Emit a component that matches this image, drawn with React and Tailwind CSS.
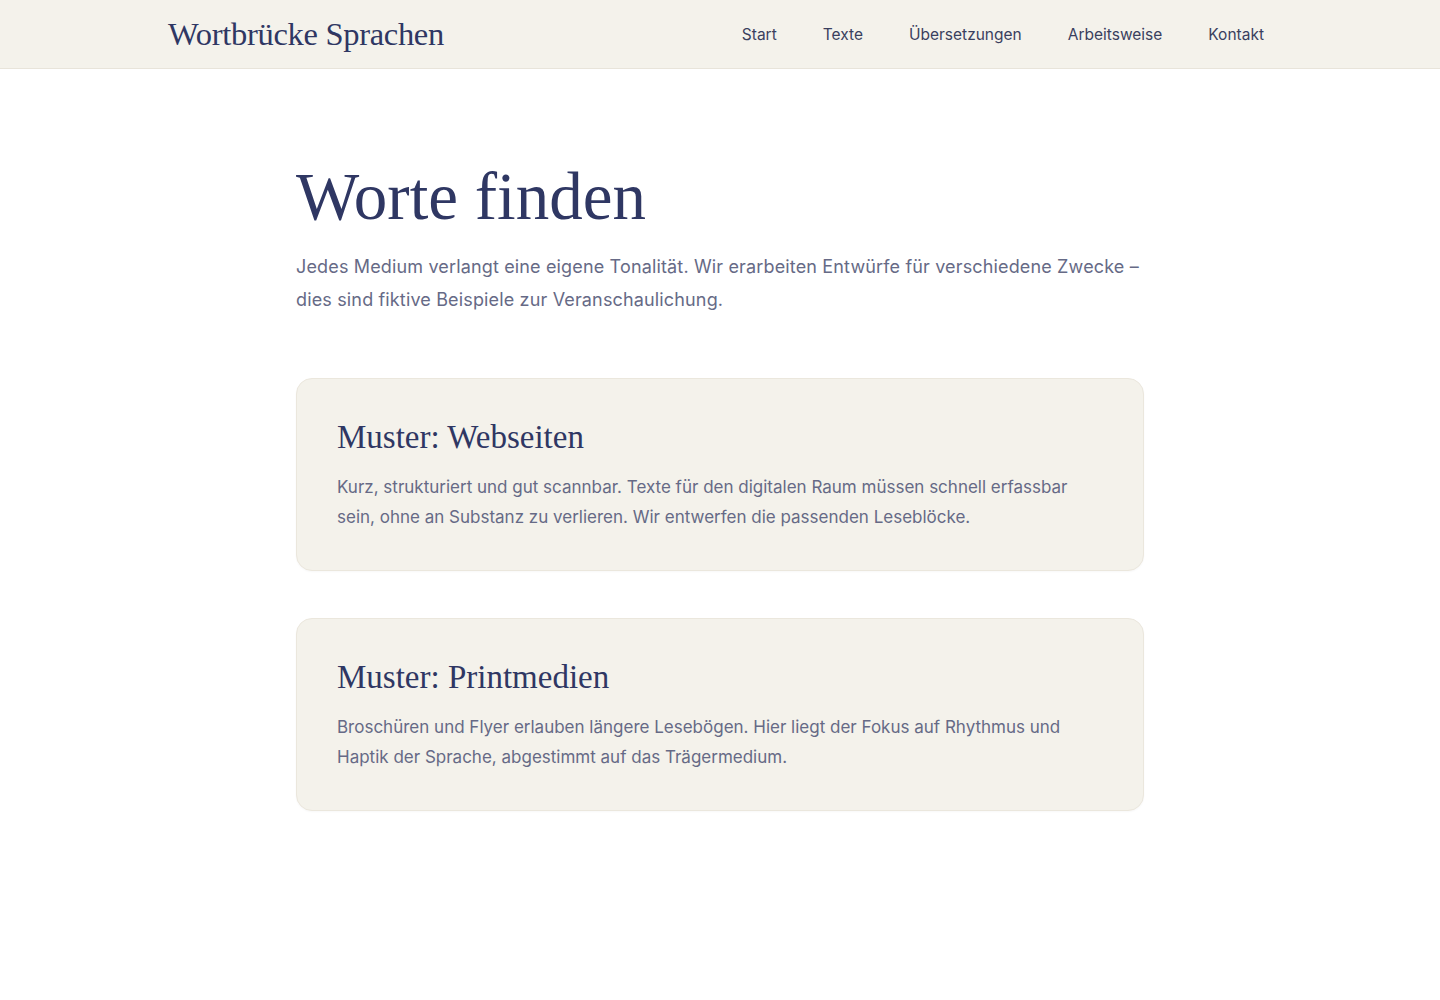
const serif = { fontFamily: '"Liberation Serif", "DejaVu Serif", serif' };

const navLinks = ["Start", "Texte", "Übersetzungen", "Arbeitsweise", "Kontakt"];

const samples = [
  {
    title: "Muster: Webseiten",
    text: "Kurz, strukturiert und gut scannbar. Texte für den digitalen Raum müssen schnell erfassbar sein, ohne an Substanz zu verlieren. Wir entwerfen die passenden Leseblöcke.",
  },
  {
    title: "Muster: Printmedien",
    text: "Broschüren und Flyer erlauben längere Lesebögen. Hier liegt der Fokus auf Rhythmus und Haptik der Sprache, abgestimmt auf das Trägermedium.",
  },
];

export default function App() {
  return (
    <div
      className="min-h-screen bg-white text-[#2f3763]"
      style={{ fontFamily: 'Inter, "Noto Sans", sans-serif' }}
    >
      {/* HEADER */}
      <header className="h-[69px] bg-[#f4f2eb] border-b border-[#e8e4da]">
        <div className="max-w-[1104px] mx-auto h-full flex items-center justify-between pr-2">
          <a className="text-[32.5px] text-[#2f3763] tracking-[-0.3px]" style={serif}>
            Wortbrücke Sprachen
          </a>
          <nav className="flex items-center gap-[46px] pt-[2px] text-[15.5px] text-[#3a3f5e]">
            {navLinks.map((l) => (
              <a key={l}>{l}</a>
            ))}
          </nav>
        </div>
      </header>

      {/* INHALT */}
      <main className="max-w-[848px] mx-auto pt-[86px] pb-24">
        <h1 className="text-[67px] leading-tight text-[#2f3763]" style={serif}>
          Worte finden
        </h1>
        <p className="mt-[11px] text-lg leading-[33px] text-[#666a86] tracking-[0.15px]">
          Jedes Medium verlangt eine eigene Tonalität. Wir erarbeiten Entwürfe für verschiedene Zwecke –
          dies sind fiktive Beispiele zur Veranschaulichung.
        </p>

        <div className="mt-[62px] flex flex-col gap-[47px]">
          {samples.map((s) => (
            <div
              key={s.title}
              className="bg-[#f4f2eb] border border-[#ebe7dd] rounded-2xl px-10 pt-[38px] pb-[38px] shadow-[0_1px_2px_rgba(0,0,0,0.03)]"
            >
              <h2 className="text-[33px] leading-tight text-[#2f3763]" style={serif}>
                {s.title}
              </h2>
              <p className="mt-[14px] text-[17px] leading-[30px] text-[#666a86] max-w-[740px]">
                {s.text}
              </p>
            </div>
          ))}
        </div>
      </main>
    </div>
  );
}
